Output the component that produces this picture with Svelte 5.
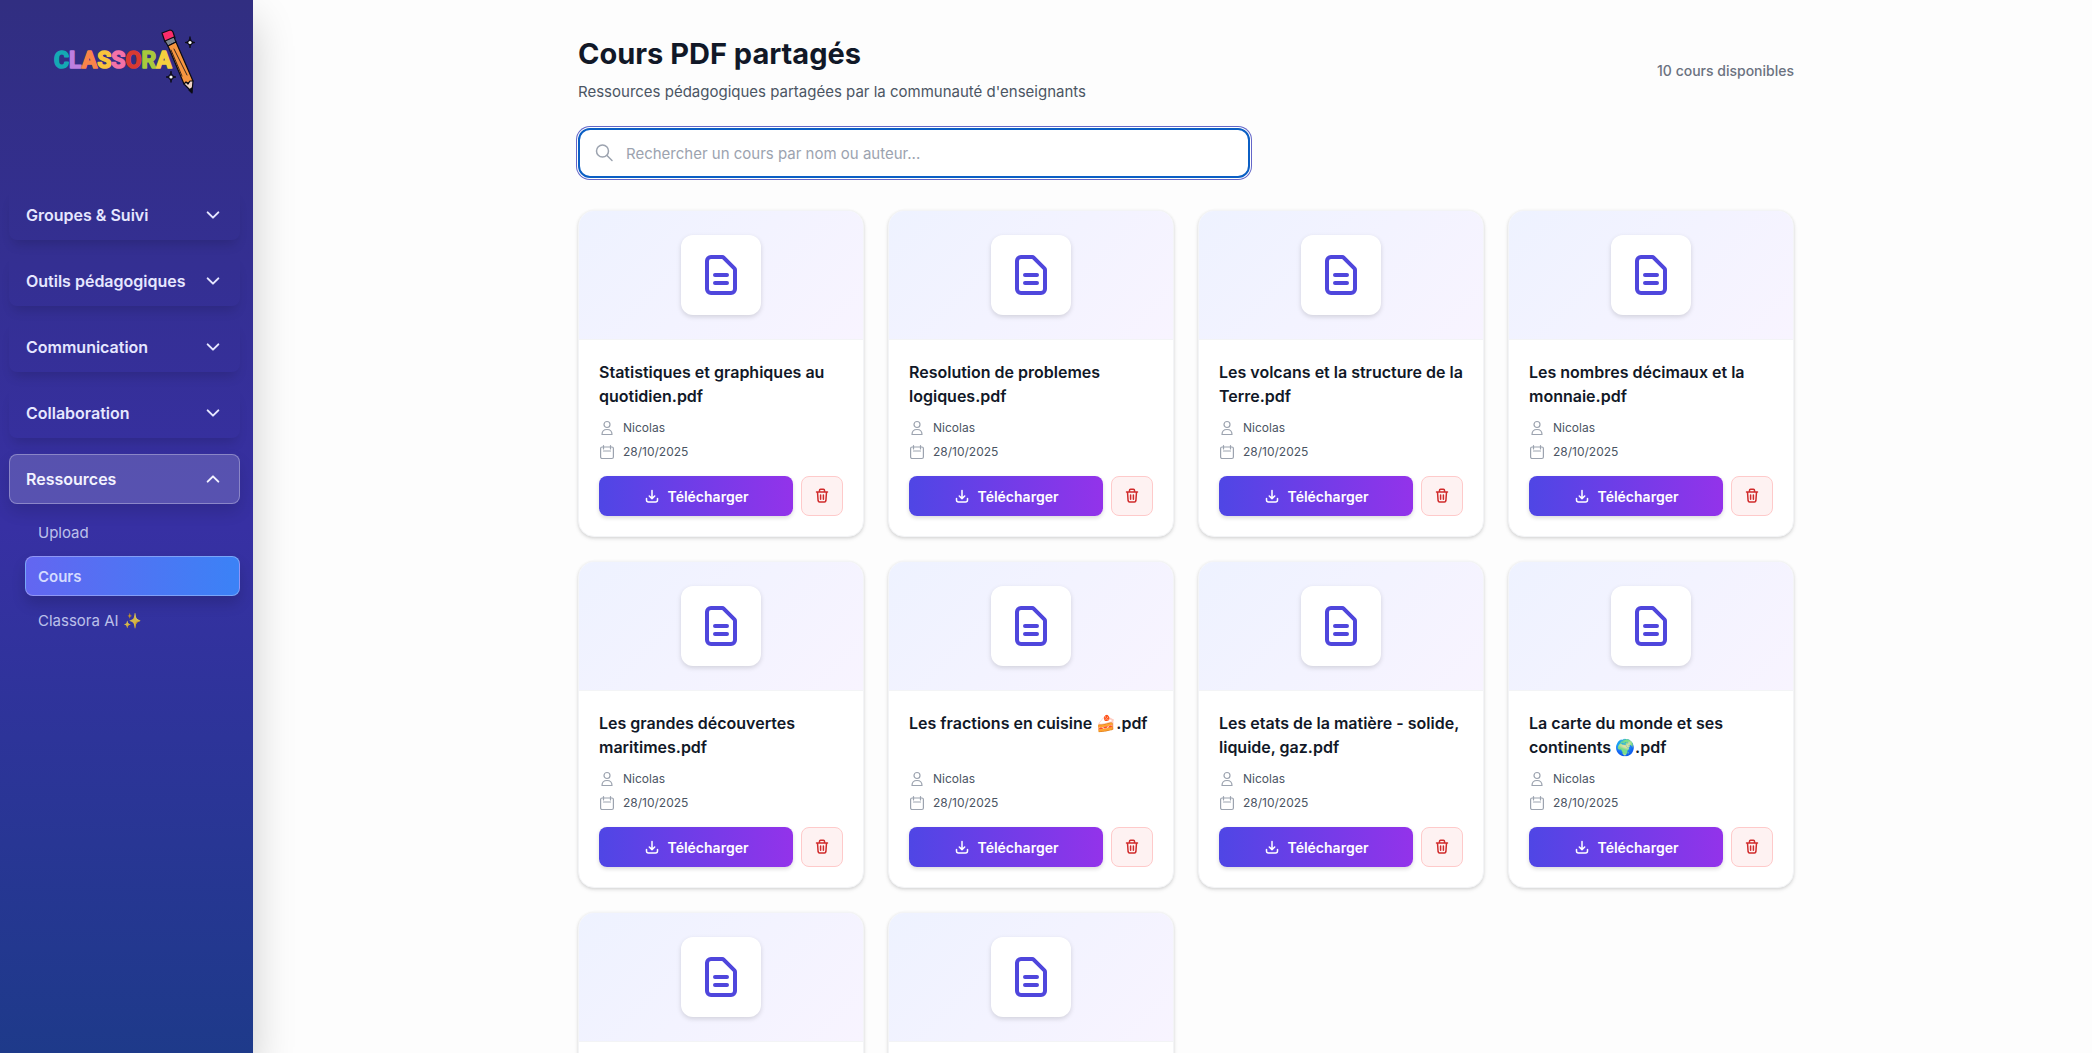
<script>
    let search = $state("");

    const menus = ["Groupes & Suivi", "Outils pédagogiques", "Communication", "Collaboration", "Ressources"];
    let openMenu = $state("Ressources");

    const links = [
        { label: "Upload", active: false },
        { label: "Cours", active: true },
        { label: "Classora AI ✨", active: false },
    ];

    const courses = [
        "Statistiques et graphiques au quotidien.pdf",
        "Resolution de problemes logiques.pdf",
        "Les volcans et la structure de la Terre.pdf",
        "Les nombres décimaux et la monnaie.pdf",
        "Les grandes découvertes maritimes.pdf",
        "Les fractions en cuisine 🍰.pdf",
        "Les etats de la matière - solide, liquide, gaz.pdf",
        "La carte du monde et ses continents 🌍.pdf",
        "Le cycle de l'eau.pdf",
        "Le corps humain.pdf",
    ].map((name) => ({ name, author: "Nicolas", date: "28/10/2025" }));

    const filtered = $derived(
        courses.filter((c) => (c.name + c.author).toLowerCase().includes(search.toLowerCase())),
    );

    const toggle = (menu) => (openMenu = openMenu === menu ? "" : menu);
</script>

<div class="layout">
    <aside class="sidebar">
        <a class="logo" href="#accueil" aria-label="Classora">
            <svg viewBox="0 0 150 75" width="150" height="75" fill="none" stroke-linecap="round" stroke-linejoin="round">
                <!-- Lettres -->
                <text class="letters" x="4" y="43"><tspan fill="#14a9b4" stroke="#14a9b4">C</tspan><tspan fill="#bd7fe0" stroke="#bd7fe0">L</tspan><tspan fill="#f9844a" stroke="#f9844a">A</tspan><tspan fill="#f9c33c" stroke="#f9c33c">S</tspan><tspan fill="#f472a8" stroke="#f472a8">S</tspan><tspan fill="#d93a32" stroke="#d93a32">O</tspan><tspan fill="#a9c93c" stroke="#a9c93c">R</tspan><tspan fill="#f5cf3e" stroke="#f5cf3e">A</tspan></text>
                <!-- Crayon -->
                <g stroke="#0b0b14" stroke-width="1.2">
                    <path d="M112 8 120 5Q122 5 123 7L125 13 115 17Z" fill="#fb2c6b" />
                    <path d="M115 16 124 12 126 17 118 21Z" fill="#7d8590" />
                    <path d="M118 21 126 17 143 56 134 59Z" fill="#f79640" />
                    <path d="M134 59 136 57 138 59 140 56 143 56 142 67Z" fill="#f0d5c8" />
                    <path d="M121 25 132 51M124 24 137 50" stroke-width="0.8" />
                    <path d="M139 65 142 63 142 68Z" fill="#0b0b14" />
                </g>
                <!-- Étoiles -->
                <g fill="#0b0b14" stroke="#0b0b14" stroke-width="0.8">
                    <path d="M140 12Q140.5 17 145 17.5 140.5 18 140 23 139.5 18 135 17.5 139.5 17 140 12Z" />
                    <path d="M121 46.5Q121.5 51.5 126 52 121.5 52.5 121 57.5 120.5 52.5 116 52 120.5 51.5 121 46.5Z" />
                </g>
                <g fill="#fff">
                    <circle cx="140" cy="17.5" r="1.6" />
                    <circle cx="121" cy="52" r="1.6" />
                </g>
            </svg>
        </a>
        <nav>
            {#each menus as menu}
                <button
                    type="button"
                    class="menu"
                    class:open={openMenu === menu}
                    aria-expanded={openMenu === menu}
                    onclick={() => toggle(menu)}
                >
                    {menu}
                    <svg viewBox="0 0 24 24" width="16" height="16" fill="none" stroke="currentColor" stroke-width="3" stroke-linecap="round" stroke-linejoin="round">
                        <path d={openMenu === menu ? "M4 16l8-8 8 8" : "M4 8l8 8 8-8"} />
                    </svg>
                </button>
            {/each}
            {#if openMenu === "Ressources"}
                <ul class="submenu">
                    {#each links as link}
                        <li><a href="#{link.label}" class:active={link.active}>{link.label}</a></li>
                    {/each}
                </ul>
            {/if}
        </nav>
    </aside>

    <main>
        <div class="container">
            <header>
                <div>
                    <h1>Cours PDF partagés</h1>
                    <p>Ressources pédagogiques partagées par la communauté d'enseignants</p>
                </div>
                <span class="count">{filtered.length} cours disponibles</span>
            </header>

            <div class="search">
                <svg viewBox="0 0 20 20" width="20" height="20" fill="none" stroke="currentColor" stroke-width="1.5" stroke-linecap="round">
                    <circle cx="8.5" cy="8" r="6" />
                    <path d="M13 12.5 18 17.5" />
                </svg>
                <input type="text" aria-label="Rechercher un cours" placeholder="Rechercher un cours par nom ou auteur..." bind:value={search} />
            </div>

            <div class="grid">
                {#each filtered as course}
                    <article class="card">
                        <div class="preview">
                            <div class="file">
                                <svg viewBox="0 0 48 48" width="48" height="48" fill="none" stroke="currentColor" stroke-width="4" stroke-linecap="round" stroke-linejoin="round">
                                    <path d="M34 42H14a4 4 0 0 1-4-4V10a4 4 0 0 1 4-4h11.2a2 2 0 0 1 1.4.6l10.8 10.8a2 2 0 0 1 .6 1.4V38a4 4 0 0 1-4 4Z" />
                                    <path d="M18 24h12M18 32h12" />
                                </svg>
                            </div>
                        </div>
                        <div class="body">
                            <h2>{course.name}</h2>
                            <div class="meta">
                                <svg viewBox="0 0 16 16" width="16" height="16" fill="none" stroke="currentColor" stroke-width="1.2" stroke-linejoin="round">
                                    <circle cx="8" cy="4.5" r="3" />
                                    <path d="M3 14.5c0-3 2-5 5-5s5 2 5 5Z" />
                                </svg>
                                {course.author}
                            </div>
                            <div class="meta">
                                <svg viewBox="0 0 16 16" width="16" height="16" fill="none" stroke="currentColor" stroke-width="1.2" stroke-linecap="round">
                                    <rect x="1.6" y="3" width="12.8" height="11.5" rx="1.5" />
                                    <path d="M4.5 1.5V5M11.5 1.5V5M4.5 7h7" />
                                </svg>
                                {course.date}
                            </div>
                            <div class="actions">
                                <button type="button" class="download">
                                    <svg viewBox="0 0 16 16" width="16" height="16" fill="none" stroke="currentColor" stroke-width="1.5" stroke-linecap="round" stroke-linejoin="round">
                                        <path d="M8 2.5v8M5.3 8 8 10.6 10.7 8M2.5 10.5v1.5a2 2 0 0 0 2 2h7a2 2 0 0 0 2-2v-1.5" />
                                    </svg>
                                    Télécharger
                                </button>
                                <button type="button" class="delete" aria-label="Supprimer {course.name}">
                                    <svg viewBox="0 0 16 16" width="16" height="16" fill="none" stroke="currentColor" stroke-width="1.5" stroke-linecap="round" stroke-linejoin="round">
                                        <path d="M2.5 4h11M5.5 4V2.2a1 1 0 0 1 1-1h3a1 1 0 0 1 1 1V4M12.5 4l-.6 8.7a1.5 1.5 0 0 1-1.5 1.3H5.6a1.5 1.5 0 0 1-1.5-1.3L3.5 4M6.6 7v4.2M9.4 7v4.2" />
                                    </svg>
                                </button>
                            </div>
                        </div>
                    </article>
                {/each}
            </div>
        </div>
    </main>
</div>

<style>
    :global(body) {
        background: #fdfdfd;
        font-family: Inter, "Liberation Sans", sans-serif;
    }

    .layout {
        display: flex;
        height: 100vh;
        overflow: hidden;
    }

    .layout * {
        box-sizing: border-box;
    }

    .sidebar {
        width: 253px;
        flex: none;
        margin-right: 27px;
        background: linear-gradient(180deg, #312e81, #3730a3 50%, #1e3a8a);
        box-shadow: 0 20px 40px rgba(0, 0, 0, 0.2);
    }

    .logo {
        display: block;
        height: 190px;
        padding: 25px 50px;
    }

    .logo svg {
        display: block;
    }

    .letters {
        font: 700 23px Roboto, "Liberation Sans", sans-serif;
        stroke-width: 1.5;
    }

    nav {
        display: flex;
        flex-direction: column;
        gap: 16px;
        padding: 0 13px 0 9px;
    }

    button {
        font-family: inherit;
        cursor: pointer;
    }

    .menu {
        display: flex;
        align-items: center;
        justify-content: space-between;
        height: 50px;
        padding: 0 18px 0 16px;
        border: 1px solid transparent;
        border-radius: 8px;
        background: transparent;
        color: #e6e7ff;
        font-size: 16px;
        font-weight: 600;
        box-shadow: 0 8px 12px -4px rgba(0, 0, 0, 0.15);
    }

    .menu.open {
        border-color: rgba(255, 255, 255, 0.3);
        background: rgba(255, 255, 255, 0.17);
        color: #f3f3ff;
        box-shadow: 0 8px 16px rgba(0, 0, 0, 0.12);
    }

    .submenu {
        display: flex;
        flex-direction: column;
        gap: 4px;
        margin: -8px 0 0 16px;
        padding: 0;
        list-style: none;
    }

    .submenu a {
        display: flex;
        align-items: center;
        height: 40px;
        padding: 0 12px;
        border: 1px solid transparent;
        border-radius: 8px;
        color: rgba(224, 231, 255, 0.8);
        font-size: 15px;
        text-decoration: none;
    }

    .submenu a.active {
        border-color: rgba(255, 255, 255, 0.3);
        background: linear-gradient(90deg, #6366f1, #3b82f6);
        color: #d5dbff;
        font-weight: 600;
        box-shadow: 0 8px 14px rgba(0, 0, 0, 0.15);
    }

    main {
        flex: 1;
        min-width: 0;
    }

    .container {
        max-width: 1280px;
        margin: 0 auto;
        padding: 36px 32px;
    }

    header {
        display: flex;
        align-items: center;
        justify-content: space-between;
        margin-bottom: 24px;
    }

    h1 {
        margin: 0 0 8px;
        color: #111827;
        font-size: 29px;
        line-height: 36px;
        font-weight: 700;
    }

    header p {
        margin: 0;
        color: #4b5563;
        font-size: 15px;
        line-height: 24px;
    }

    .count {
        color: #6b7280;
        font-size: 14px;
        font-weight: 500;
    }

    .search {
        display: flex;
        align-items: center;
        gap: 12px;
        max-width: 672px;
        height: 50px;
        margin-bottom: 32px;
        padding: 0 14px;
        border: 2px solid #0b5fc4;
        border-radius: 12px;
        background: #fff;
        color: #9ca3af;
        box-shadow: 0 0 0 1px #fff, 0 0 0 2px #6366c8;
    }

    .search input {
        flex: 1;
        border: 0;
        outline: 0;
        padding: 0;
        background: transparent;
        color: #111827;
        font: inherit;
        font-size: 15px;
    }

    .search input::placeholder {
        color: #9ca3af;
    }

    .grid {
        display: grid;
        grid-template-columns: repeat(4, 1fr);
        gap: 24px;
    }

    .card {
        overflow: hidden;
        border: 1px solid #f3f4f6;
        border-radius: 16px;
        background: #fff;
        box-shadow: 0 1px 3px rgba(0, 0, 0, 0.1), 0 2px 4px rgba(0, 0, 0, 0.08);
    }

    .preview {
        display: flex;
        justify-content: center;
        padding: 24px;
        border-bottom: 1px solid #f3f4f6;
        background: linear-gradient(135deg, #eef2ff, #f8f4ff);
    }

    .file {
        display: grid;
        place-items: center;
        width: 80px;
        height: 80px;
        border-radius: 12px;
        background: #fff;
        color: #4f46dc;
        box-shadow: 0 2px 5px rgba(0, 0, 0, 0.14);
    }

    .body {
        padding: 20px;
    }

    h2 {
        height: 48px;
        margin: 0 0 12px;
        color: #111827;
        font-size: 16px;
        line-height: 24px;
        font-weight: 600;
    }

    .meta {
        display: flex;
        align-items: center;
        gap: 8px;
        height: 16px;
        margin-bottom: 8px;
        color: #4b5563;
        font-size: 12px;
        line-height: 16px;
    }

    .meta svg {
        color: #9ca3af;
    }

    .actions {
        display: flex;
        gap: 8px;
        margin-top: 16px;
    }

    .download,
    .delete {
        display: flex;
        align-items: center;
        justify-content: center;
        height: 40px;
        border-radius: 8px;
    }

    .download {
        flex: 1;
        gap: 8px;
        border: 0;
        background: linear-gradient(90deg, #4f46e5, #9333ea);
        color: #fff;
        font-size: 14px;
        font-weight: 600;
        box-shadow: 0 2px 4px rgba(0, 0, 0, 0.14);
    }

    .delete {
        width: 42px;
        border: 1px solid #fecaca;
        background: #fef2f2;
        color: #d02b2b;
    }
</style>
